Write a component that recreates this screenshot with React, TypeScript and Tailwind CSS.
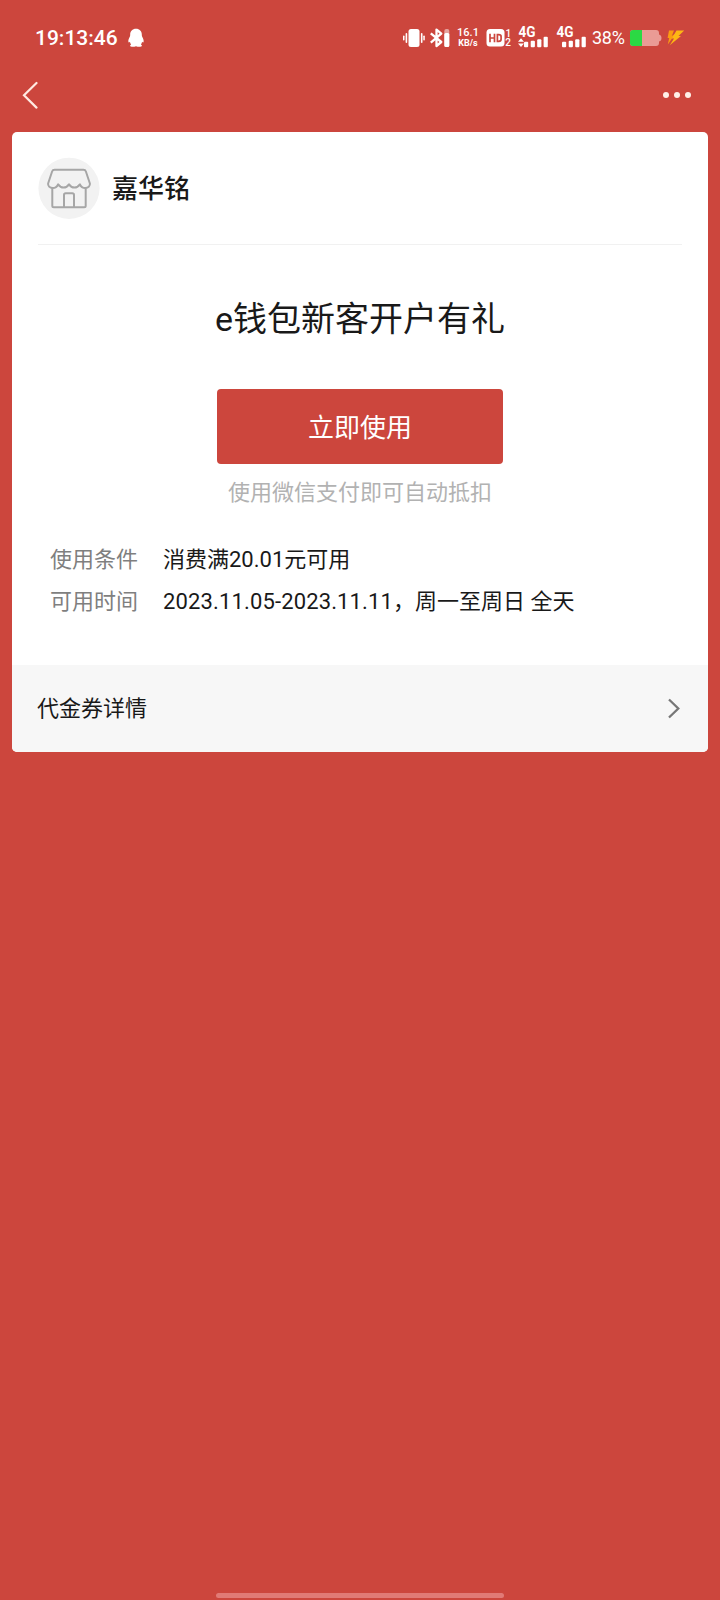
const SIGNAL_BARS = [
  { x: 0, height: 5.5 },
  { x: 6.7, height: 6.5 },
  { x: 13.2, height: 8 },
  { x: 19.6, height: 10.5 },
];

const CONDITIONS = [
  { label: "使用条件", date: "", value: "消费满20.01元可用" },
  { label: "可用时间", date: "2023.11.05-2023.11.11", value: "，周一至周日 全天" },
];

const Signal = ({ data = false }: { data?: boolean }) => {
  return (
    <svg width="32" height="24" viewBox="0 0 32 24" fill="#fff">
      <text x="0.5" y="13" fontFamily="Roboto" fontSize="14" fontWeight="700" textLength="17" lengthAdjust="spacingAndGlyphs">
        4G
      </text>
      {data && <path d="M0 17.800l3-3.600 3 3.600zM0 19.400l3 3.600 3-3.600z" />}
      {SIGNAL_BARS.map((bar) => (
        <rect
          key={bar.x}
          x={bar.x + 6}
          y={23.2 - bar.height}
          width="4.2"
          height={bar.height}
          rx="1"
        />
      ))}
    </svg>
  );
};

const StatusBar = () => {
  return (
    <div className="flex h-[76px] items-center pl-[35px] text-white">
      <span className="w-[83px] text-[21px] leading-none font-medium">19:13:46</span>
      <svg className="ml-[10px]" width="16" height="20" viewBox="0 0 16 20" fill="#fff">
        <path d="M8 .8c3.600 0 5.800 2.500 5.800 5.600 0 .9.100 1.600.4 2.400.9 1.600 1.700 3.400 1.400 5.200-.2.700-1 .5-1.500-.3-.2 1.100-.6 2-1.200 2.700.6.400 1 .8 1 1.400 0 1.100-3.300 1.400-5.900.5-2.600.9-5.900.6-5.900-.5 0-.6.4-1 1-1.400-.6-.7-1-1.600-1.200-2.700-.5.800-1.300 1-1.500.3-.3-1.800.5-3.600 1.400-5.200.3-.8.4-1.500.4-2.400C2.200 3.300 4.400.8 8 .8z" />
      </svg>
      <svg className="ml-[258px]" width="23" height="20" viewBox="0 0 23 20" fill="#fff">
        <rect x="6.500" y="1" width="11" height="18" rx="2.500" />
        <rect x="3.600" y="5" width="1.600" height="10" rx=".8" />
        <rect x="1" y="7.500" width="1.500" height="5" rx=".7" />
        <rect x="18.900" y="5" width="1.600" height="10" rx=".8" />
        <rect x="21.300" y="7.500" width="1.500" height="5" rx=".7" />
      </svg>
      <svg className="ml-[5px]" width="20" height="20" viewBox="0 0 20 20" fill="#fff">
        <path
          d="M.8 5.300l10.500 8.700-4.800 4V1.600l4.800 4-10.500 9"
          fill="none"
          stroke="#fff"
          strokeWidth="2.300"
          strokeLinejoin="round"
        />
        <rect x="14.300" y="1" width="5" height="18" rx="2" opacity=".5" />
        <rect x="14.300" y="5" width="5" height="14" rx="1.500" />
      </svg>
      <div className="ml-[7px] flex w-[22px] flex-col items-center text-center font-medium">
        <span className="text-[11px] leading-[10px]">16.1</span>
        <span className="text-[9px] leading-[10px] font-bold">KB/s</span>
      </div>
      <svg className="ml-[7px]" width="26" height="22" viewBox="0 -1 26 22" fill="#fff">
        <rect x=".5" y="1" width="18" height="17.500" rx="3.500" />
        <path
          d="M4 5.800v8.400M4 10h4.500M8.500 5.800v8.400M11.400 6.700v6.600h1.300q2.400 0 2.400-2V8.700q0-2-2.400-2z"
          fill="none"
          stroke="#cc463d"
          strokeWidth="1.700"
        />
        <text x="19.500" y="8.500" fontFamily="Roboto" fontSize="10" fontWeight="500">1</text>
        <text x="19.300" y="18" fontFamily="Roboto" fontSize="10" fontWeight="500">2</text>
      </svg>
      <div className="ml-[6px] flex gap-[6px] pb-[4px]">
        <Signal data />
        <Signal />
      </div>
      <span className="ml-[4px] w-[34px] text-[18px] leading-none tracking-[-0.3px]">38%</span>
      <svg className="ml-[4px]" width="32" height="16" viewBox="0 0 32 16">
        <path
          d="M3 0h23q3 0 3 3v1.500q2.500.5 2.500 3.500T29 11.500V13q0 3-3 3H3q-3 0-3-3V3q0-3 3-3z"
          fill="#ea9b95"
        />
        <path d="M3 0h9v16H3q-3 0-3-3V3q0-3 3-3z" fill="#2bd944" />
      </svg>
      <svg className="ml-[5px]" width="18" height="16" viewBox="0 0 18 16">
        <path d="M2 .5h5L4.800 6 8.500 3.500.8 14.500 2.200 8H.6z" fill="#fb9c12" />
        <path d="M9.500.5h7.700L11.500 6h2.500L2.800 15.200 7 8.500H4.800z" fill="#fdb714" />
      </svg>
    </div>
  );
};

const NavBar = () => {
  return (
    <div className="flex h-[56px] items-start justify-between pr-[29px] pl-[22px]">
      <svg className="mt-[5px]" width="17" height="28" viewBox="0 0 17 28" fill="none">
        <path d="M14.500 2L2 14.300l12.500 12.300" stroke="#ffeae2" strokeWidth="2.200" strokeLinecap="round" />
      </svg>
      <div className="mt-[16px] flex gap-[5px]">
        <span className="size-[6px] rounded-full bg-[#fff0e8]" />
        <span className="size-[6px] rounded-full bg-[#fff0e8]" />
        <span className="size-[6px] rounded-full bg-[#fff0e8]" />
      </div>
    </div>
  );
};

const StoreIcon = () => {
  return (
    <svg width="62" height="62" viewBox="0 0 62 62" fill="none">
      <circle cx="31" cy="31.300" r="30.600" fill="#f2f2f2" />
      <g stroke="#a6a6a6" strokeWidth="2" strokeLinejoin="round">
        <path d="M16.500 12.800h29q1.800 0 2.400 1.700l4 12c.3 2.300-1.500 4.500-4.600 4.600-2.900 0-4.500-1.500-5.400-3.700-1.600 2.200-3 3.200-5.400 3.200s-4.100-1-5.500-3.200c-1.400 2.200-3.100 3.200-5.500 3.200s-3.800-1-5.400-3.200c-.9 2.200-2.500 3.700-5.400 3.700-3.100-.1-4.900-2.300-4.600-4.600l4-12q.6-1.700 2.400-1.700z" />
        <path d="M14.300 31v17.800q0 1.500 1.500 1.500h30.400q1.500 0 1.500-1.500V31M26 50V38q0-1.700 1.700-1.700h6.600q1.700 0 1.700 1.700V50" />
      </g>
    </svg>
  );
};

const App = () => {
  return (
    <div className="flex h-[1600px] w-[720px] flex-col bg-[#cc463d] font-['Roboto','Noto_Sans_CJK_SC',sans-serif] text-[#191919]">
      <StatusBar />
      <NavBar />
      <div className="ml-[12px] h-[620px] w-[696px] overflow-hidden rounded-[5px] bg-white">
        <div className="mr-[26px] ml-[26px] flex h-[113px] items-center border-b border-[#f1f1f1]">
          <StoreIcon />
          <h2 className="mt-[1px] ml-[12px] text-[26px] leading-none font-medium">嘉华铭</h2>
        </div>
        <div className="flex h-[420px] flex-col items-center">
          <h1 className="mt-[49px] text-[34px] leading-[50px]">e钱包新客开户有礼</h1>
          <button className="mt-[45px] h-[75px] w-[286px] rounded-[4px] bg-[#cc463d] pt-[2px] text-[26px] leading-none text-white">
            立即使用
          </button>
          <p className="mt-[13px] text-[22px] leading-[32px] text-[#b2b2b2]">使用微信支付即可自动抵扣</p>
          <div className="mt-[30px] w-full pl-[38px]">
            {CONDITIONS.map((item) => (
              <div key={item.label} className="flex h-[42px] items-center text-[22px] leading-none">
                <span className="w-[113px] text-[#7f7f7f]">{item.label}</span>
                <span>
                  <span className="tracking-[0.14px]">{item.date}</span>
                  {item.value}
                </span>
              </div>
            ))}
          </div>
        </div>
        <div className="flex h-[87px] items-center justify-between bg-[#f7f7f7] pr-[27px] pl-[25px]">
          <span className="pt-[1px] text-[22px] leading-none">代金券详情</span>
          <svg width="14" height="22" viewBox="0 0 14 22" fill="none">
            <path d="M2 1.500l9.300 9L2 19.500" stroke="#777" strokeWidth="2.300" />
          </svg>
        </div>
      </div>
      <div className="mx-auto mt-auto mb-[2px] h-[5px] w-[288px] rounded-full bg-[#e17a76]" />
    </div>
  );
};

export default App;
